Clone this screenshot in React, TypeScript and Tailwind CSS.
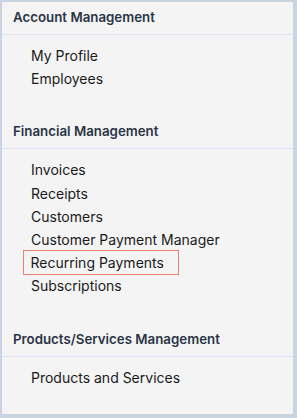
import React from "react";

const sections = [
  { title: "Account Management", items: ["My Profile", "Employees"] },
  {
    title: "Financial Management",
    items: ["Invoices", "Receipts", "Customers", "Customer Payment Manager", "Recurring Payments", "Subscriptions"],
  },
  { title: "Products/Services Management", items: ["Products and Services"] },
];

export default function App() {
  return (
    <div className="w-[297px] h-[418px] bg-[#c9d4e0] pt-[2px] pl-[2px] pr-[4px] pb-[4px]" style={{ fontFamily: "Inter, 'Noto Sans', sans-serif" }}>
      <div className="h-full bg-[#f4f4f4] flex flex-col">
        {sections.map((s) => (
          <div key={s.title}>
            <div className="h-[33px] flex items-center px-[11px] border-b border-[#dde6f2] text-[13.3px] font-semibold text-[#2b3446]">
              {s.title}
            </div>
            <div className="pt-[9px] pb-[26px] flex flex-col">
              {s.items.map((it) => (
                <div key={it} className="h-[23.2px] flex items-center pl-[29px]">
                  {it === "Recurring Payments" ? (
                    <span className="h-[25px] w-[156px] -ml-[8px] pl-[6.5px] flex items-center border-[1.5px] border-[#f0806f] text-[14px] text-[#1a1a1a]">
                      {it}
                    </span>
                  ) : (
                    <span className="text-[14px] text-[#1a1a1a]">{it}</span>
                  )}
                </div>
              ))}
            </div>
          </div>
        ))}
      </div>
    </div>
  );
}
